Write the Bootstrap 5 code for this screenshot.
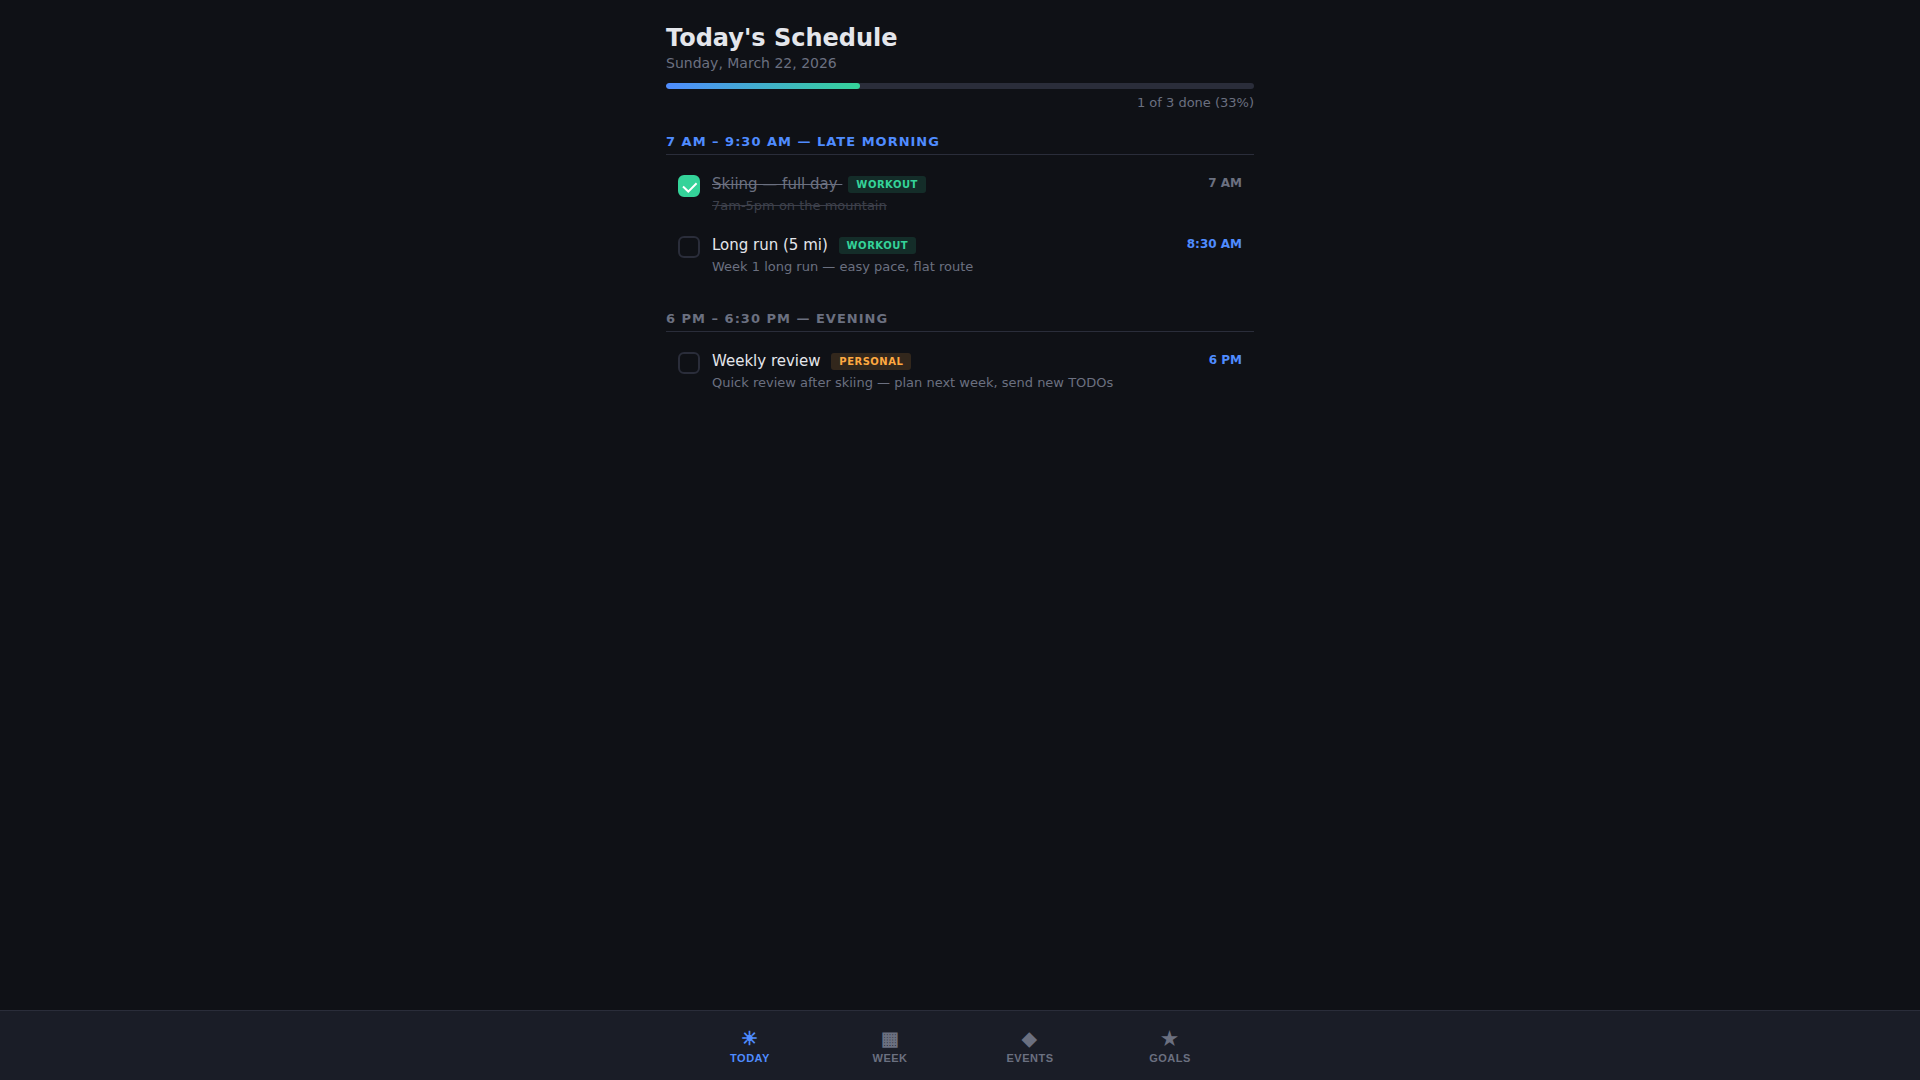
<!DOCTYPE html>
<html lang="en" data-bs-theme="dark">
<head>
<meta charset="utf-8">
<meta name="viewport" content="width=device-width, initial-scale=1">
<title>Today's Schedule</title>
<link href="https://cdn.jsdelivr.net/npm/bootstrap@5.3.0/dist/css/bootstrap.min.css" rel="stylesheet">
<style>
  :root { --bg: #0f1116; --surface: #1a1d27; --line: #2a2d3a; --ink: #e4e6eb; --muted: #6b7080; --accent: #4f8cff; --green: #34d399; --orange: #ffa940; }
  body { background: var(--bg); color: var(--ink); font-family: "DejaVu Sans", sans-serif; font-size: 15px; line-height: 23px; }
  .planner { max-width: 620px; padding: 21px 16px 90px; }
  .page-title { font-size: 24px; line-height: 34px; font-weight: 700; color: var(--ink); }
  .page-date { font-size: 14px; line-height: 17px; color: var(--muted); }
  .day-progress { --bs-progress-height: 6px; --bs-progress-bg: var(--line); --bs-progress-border-radius: 3px; margin-top: 11px; }
  .day-progress .progress-bar { background: linear-gradient(90deg, var(--accent), var(--green)); border-radius: 3px; }
  .day-count { font-size: 13px; line-height: 18px; color: var(--muted); margin-top: 5px; }
  .block-title { font-size: 13px; line-height: 18px; font-weight: 700; letter-spacing: 1px; text-transform: uppercase; color: var(--muted); border-bottom: 1px solid var(--line); padding-bottom: 3px; margin-bottom: 8px; }
  .block-title.is-now { color: var(--accent); }
  .time-block { margin-top: 21px; }
  .time-block + .time-block { margin-top: 25px; }
  .task { padding: 10px 12px 9px; gap: 12px; }
  .task .form-check-input { width: 22px; height: 22px; margin: 2px 0 0; border: 2px solid var(--line); border-radius: 6px; background-color: transparent; background-origin: border-box; background-size: 22px; }
  .task .form-check-input:checked { background-color: var(--green); border-color: var(--green); background-image: url("data:image/svg+xml,%3csvg xmlns='http://www.w3.org/2000/svg' viewBox='0 0 22 22'%3e%3cpath fill='none' stroke='%23fff' stroke-width='2' d='M5 11.6L10.3 16.6L18.6 8.3'/%3e%3c/svg%3e"); }
  .task-name { cursor: pointer; line-height: 23px; }
  .task-note { font-size: 13px; line-height: 18px; margin-top: 1px; color: var(--muted); }
  .task-time { font-size: 12px; line-height: 20px; font-weight: 700; color: var(--accent); }
  .task-tag { display: inline-block; font-size: 10px; line-height: 13px; font-weight: 700; letter-spacing: .5px; text-transform: uppercase; padding: 2px 8px; border-radius: 3px; margin-left: 6px; vertical-align: middle; }
  .tag-workout { color: var(--green); background: #34d39926; }
  .tag-personal { color: var(--orange); background: #ffa94026; }
  .is-done .task-name, .is-done .task-time { color: var(--muted); }
  .is-done .task-name, .is-done .task-note { text-decoration: line-through; }
  .is-done .task-note { opacity: .5; }
  .tabbar { background: var(--surface); border-top: 1px solid var(--line); padding: 8px 0; }
  .tabs { max-width: 560px; }
  .tab-btn { background: none; border: 0; padding: 7px 0; color: var(--muted); font-family: "Liberation Sans", Arial, sans-serif; font-size: 11px; line-height: 13px; font-weight: 700; letter-spacing: .5px; text-transform: uppercase; }
  .tab-btn.active { color: var(--accent); }
  .tab-glyph { font-size: 19px; line-height: 25px; margin-bottom: 1px; }
</style>
</head>
<body>
<main class="planner container-fluid mx-auto">
  <header>
    <h1 class="page-title mb-0">Today's Schedule</h1>
    <p class="page-date mb-0">Sunday, March 22, 2026</p>
    <div class="progress day-progress" role="progressbar" aria-label="Tasks done" aria-valuenow="33" aria-valuemin="0" aria-valuemax="100">
      <div class="progress-bar" style="width: 33%"></div>
    </div>
    <p class="day-count text-end mb-0">1 of 3 done (33%)</p>
  </header>

  <section class="time-block">
    <h2 class="block-title is-now">7 AM – 9:30 AM — Late Morning</h2>
    <div class="task is-done d-flex align-items-start">
      <input class="form-check-input flex-shrink-0" type="checkbox" id="task-ski" checked>
      <div class="flex-grow-1">
        <label class="task-name d-block" for="task-ski">Skiing — full day <span class="task-tag tag-workout">Workout</span></label>
        <div class="task-note">7am-5pm on the mountain</div>
      </div>
      <div class="task-time text-nowrap">7 AM</div>
    </div>
    <div class="task d-flex align-items-start">
      <input class="form-check-input flex-shrink-0" type="checkbox" id="task-run">
      <div class="flex-grow-1">
        <label class="task-name d-block" for="task-run">Long run (5 mi) <span class="task-tag tag-workout">Workout</span></label>
        <div class="task-note">Week 1 long run — easy pace, flat route</div>
      </div>
      <div class="task-time text-nowrap">8:30 AM</div>
    </div>
  </section>

  <section class="time-block">
    <h2 class="block-title">6 PM – 6:30 PM — Evening</h2>
    <div class="task d-flex align-items-start">
      <input class="form-check-input flex-shrink-0" type="checkbox" id="task-review">
      <div class="flex-grow-1">
        <label class="task-name d-block" for="task-review">Weekly review <span class="task-tag tag-personal">Personal</span></label>
        <div class="task-note">Quick review after skiing — plan next week, send new TODOs</div>
      </div>
      <div class="task-time text-nowrap">6 PM</div>
    </div>
  </section>
</main>

<nav class="tabbar fixed-bottom" aria-label="Views">
  <div class="tabs d-flex mx-auto">
    <button type="button" class="tab-btn active flex-fill w-100" aria-current="page"><span class="tab-glyph d-block" aria-hidden="true">☀</span>Today</button>
    <button type="button" class="tab-btn flex-fill w-100"><span class="tab-glyph d-block" aria-hidden="true">▦</span>Week</button>
    <button type="button" class="tab-btn flex-fill w-100"><span class="tab-glyph d-block" aria-hidden="true">◆</span>Events</button>
    <button type="button" class="tab-btn flex-fill w-100"><span class="tab-glyph d-block" aria-hidden="true">★</span>Goals</button>
  </div>
</nav>
<script src="https://cdn.jsdelivr.net/npm/bootstrap@5.3.0/dist/js/bootstrap.bundle.min.js"></script>
</body>
</html>
